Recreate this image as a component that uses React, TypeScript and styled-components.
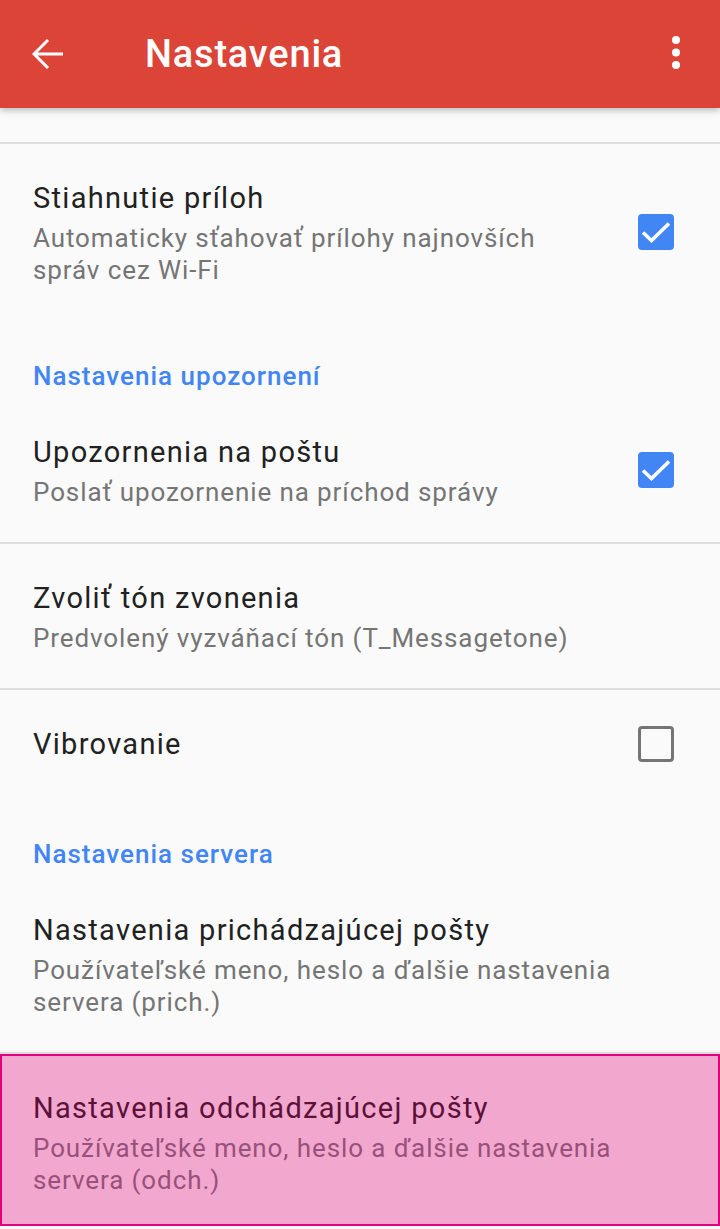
import React from 'react'
import styled, { createGlobalStyle } from 'styled-components'

const GlobalStyle = createGlobalStyle`
  html, body {
    margin: 0;
    padding: 0;
    background: #fafafa;
  }
  body {
    font-family: Roboto, "Noto Sans", "Liberation Sans", sans-serif;
    -webkit-font-smoothing: antialiased;
  }
`

const Screen = styled.div`
  width: 720px;
  height: 1229px;
  overflow: hidden;
  background: #fafafa;
`

const AppBar = styled.header`
  position: relative;
  z-index: 1;
  height: 108px;
  display: flex;
  align-items: center;
  background: #db4437;
  box-shadow: 0 2px 7px rgba(0, 0, 0, 0.28);
`

const IconButton = styled.div<{ gutter: string }>`
  display: flex;
  align-items: center;
  justify-content: center;
  margin: ${({ gutter }) => gutter};
`

const BarTitle = styled.h1`
  margin: 0 0 0 81px;
  font-size: 38px;
  font-weight: 500;
  line-height: 48px;
  color: #fff;
  letter-spacing: 0.8px;
`

const Spacer = styled.div`
  flex: 1;
`

const List = styled.div`
  display: flex;
  flex-direction: column;
`

const ScrolledTail = styled.div`
  height: 34px;
`

const Divider = styled.div`
  height: 2px;
  background: #dedede;
`

const Row = styled.div<{ highlighted?: boolean }>`
  display: flex;
  align-items: center;
  gap: 48px;
  padding: ${({ highlighted }) => (highlighted ? '32px 44px 28px 31px' : '34px 46px 34px 33px')};
  background: ${({ highlighted }) => (highlighted ? '#f2a8ce' : 'transparent')};
  border: ${({ highlighted }) => (highlighted ? '2px solid #e4007c' : 'none')};
`

const RowText = styled.div`
  flex: 1;
  min-width: 0;
`

const RowTitle = styled.div<{ highlighted?: boolean }>`
  font-size: 29px;
  line-height: 40px;
  letter-spacing: 1.3px;
  color: ${({ highlighted }) => (highlighted ? '#5c1139' : '#212121')};
`

const RowSummary = styled.div<{ highlighted?: boolean }>`
  margin-top: 4px;
  font-size: 26px;
  line-height: 32px;
  letter-spacing: 0.9px;
  color: ${({ highlighted }) => (highlighted ? '#99507b' : '#757575')};
`

const SectionHeader = styled.div`
  padding: 40px 33px 6px;
  font-size: 26px;
  font-weight: 500;
  line-height: 32px;
  letter-spacing: 1px;
  color: #4285f4;
`

const Box = styled.div<{ checked: boolean }>`
  flex: none;
  width: 36px;
  height: 36px;
  box-sizing: border-box;
  border-radius: 4px;
  display: flex;
  align-items: center;
  justify-content: center;
  background: ${({ checked }) => (checked ? '#4285f4' : 'transparent')};
  border: ${({ checked }) => (checked ? 'none' : '3px solid #757575')};
`

const Checkbox = ({ checked }: { checked: boolean }) => (
  <Box checked={checked}>
    {checked && (
      <svg width="36" height="36" viewBox="0 0 36 36">
        <path
          d="M5 18.5 L13.5 26.5 L31 9.5"
          fill="none"
          stroke="#fff"
          strokeWidth="3.6"
        />
      </svg>
    )}
  </Box>
)

const BackArrow = () => (
  <svg width="32" height="32" viewBox="0 0 32 32">
    <path
      d="M31 16 H3 M16 2 L2 16 L16 30"
      fill="none"
      stroke="#fff"
      strokeWidth="3"
    />
  </svg>
)

const MoreDots = () => (
  <svg width="8" height="34" viewBox="0 0 8 34">
    <circle cx="4" cy="4" r="4" fill="#fff" />
    <circle cx="4" cy="16.5" r="4" fill="#fff" />
    <circle cx="4" cy="29" r="4" fill="#fff" />
  </svg>
)

type Pref = {
  title: string
  summary?: string
  checked?: boolean
  highlighted?: boolean
}

const PrefRow = ({ title, summary, checked, highlighted }: Pref) => (
  <Row highlighted={highlighted}>
    <RowText>
      <RowTitle highlighted={highlighted}>{title}</RowTitle>
      {summary && <RowSummary highlighted={highlighted}>{summary}</RowSummary>}
    </RowText>
    {checked !== undefined && <Checkbox checked={checked} />}
  </Row>
)

const App = () => {
  return (
    <Screen>
      <GlobalStyle />
      <AppBar>
        <IconButton gutter="0 0 0 32px">
          <BackArrow />
        </IconButton>
        <BarTitle>Nastavenia</BarTitle>
        <Spacer />
        <IconButton gutter="0 40px 2px 0">
          <MoreDots />
        </IconButton>
      </AppBar>
      <List>
        <ScrolledTail />
        <Divider />
        <PrefRow
          title="Stiahnutie príloh"
          summary="Automaticky sťahovať prílohy najnovších správ cez Wi-Fi"
          checked
        />
        <SectionHeader>Nastavenia upozornení</SectionHeader>
        <PrefRow
          title="Upozornenia na poštu"
          summary="Poslať upozornenie na príchod správy"
          checked
        />
        <Divider />
        <PrefRow
          title="Zvoliť tón zvonenia"
          summary="Predvolený vyzváňací tón (T_Messagetone)"
        />
        <Divider />
        <PrefRow title="Vibrovanie" checked={false} />
        <SectionHeader>Nastavenia servera</SectionHeader>
        <PrefRow
          title="Nastavenia prichádzajúcej pošty"
          summary="Používateľské meno, heslo a ďalšie nastavenia servera (prich.)"
        />
        <Divider />
        <PrefRow
          title="Nastavenia odchádzajúcej pošty"
          summary="Používateľské meno, heslo a ďalšie nastavenia servera (odch.)"
          highlighted
        />
      </List>
    </Screen>
  )
}

export default App
